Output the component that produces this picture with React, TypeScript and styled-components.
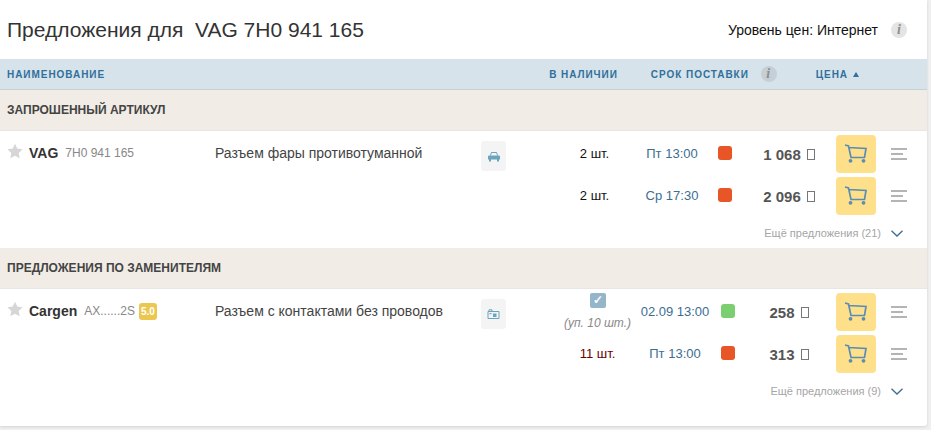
import React from "react";
import styled, { createGlobalStyle } from "styled-components";

const GlobalStyle = createGlobalStyle`
    html, body {
        margin: 0;
        padding: 0;
        width: 931px;
        height: 430px;
        overflow: hidden;
        background: #f0f0f0;
        font-family: "Liberation Sans", Arial, sans-serif;
    }
`;

const Panel = styled.div`
    width: 927px;
    height: 426px;
    background: #fff;
    border-radius: 0 0 3px 0;
    box-shadow: 0 1px 3px rgba(0, 0, 0, 0.12);
`;

const TopBar = styled.header`
    height: 59px;
    display: flex;
    align-items: center;
    justify-content: space-between;
    padding: 0 20px 0 7px;
`;

const Title = styled.h1`
    margin: 0;
    font-size: 21px;
    font-weight: 400;
    color: #333;
    white-space: pre;
`;

const PriceLevel = styled.div`
    display: flex;
    align-items: center;
    gap: 13px;
    font-size: 14px;
    color: #111;
`;

const InfoBadge = styled.span<{ $dark?: boolean }>`
    width: 16px;
    height: 16px;
    border-radius: 50%;
    background: ${(p) => (p.$dark ? "#c4cfd6" : "#e4e4e4")};
    color: #8e8e8e;
    font-family: "Liberation Serif", serif;
    font-style: italic;
    font-weight: 700;
    font-size: 14px;
    line-height: 16px;
    text-align: center;
`;

const TableHead = styled.div`
    height: 30px;
    display: flex;
    align-items: center;
    padding-left: 7px;
    background: #d7e3ea;
    border-bottom: 1px solid #c9d0d2;
    font-size: 10px;
    font-weight: 700;
    letter-spacing: 0.95px;
    color: #30709c;
`;

const HeadName = styled.span`
    flex: 1;
`;

const HeadStock = styled.span`
    margin-right: 33px;
`;

const HeadTerm = styled.span`
    margin-right: 12px;
`;

const HeadPrice = styled.span`
    margin-left: 39px;
    margin-right: 68px;
`;

const SortArrow = styled.span`
    display: inline-block;
    margin-left: 5px;
    border-left: 3px solid transparent;
    border-right: 3px solid transparent;
    border-bottom: 5px solid #30709c;
    vertical-align: 1px;
`;

const SectionTitle = styled.div`
    height: 41px;
    display: flex;
    align-items: center;
    padding-left: 7px;
    background: #f1ede6;
    border-bottom: 1px solid #e6e6e6;
    box-sizing: border-box;
    font-size: 12px;
    font-weight: 700;
    color: #444;
`;

const Group = styled.section`
    padding-top: 4px;
    display: flex;
    flex-direction: column;
    gap: 4px;

    &:last-child {
        padding-bottom: 20px;
    }
`;

const Row = styled.div<{ $shift: number }>`
    display: grid;
    grid-template-columns: 208px 266px ${(p) => 75 + p.$shift}px 77px 78px ${(p) => 31 - p.$shift}px 94px 40px 51px;
    height: 38px;
    padding-left: 7px;
    align-items: center;
`;

const PartCell = styled.div`
    display: flex;
    align-items: center;
    margin-top: -2px;
`;

const StarIcon = styled.svg`
    width: 16px;
    height: 16px;
    margin: -4px 6px 0 0;
    fill: #d6d6d6;
`;

const Brand = styled.span`
    font-size: 14px;
    font-weight: 700;
    color: #333;
    margin-right: 7px;
`;

const Article = styled.span`
    font-size: 12px;
    color: #888;
`;

const Rating = styled.span`
    width: 18px;
    height: 17px;
    margin-left: 4px;
    border-radius: 3px;
    background: #ecc750;
    color: #fff;
    font-size: 10px;
    font-weight: 700;
    line-height: 17px;
    text-align: center;
`;

const Description = styled.div`
    font-size: 14px;
    color: #444;
    margin-top: -2px;
`;

const IconBox = styled.div`
    width: 25px;
    height: 30px;
    margin-top: 6px;
    align-self: start;
    display: flex;
    align-items: center;
    justify-content: center;
    border-radius: 3px;
    background: #f4f4f4;
`;

const StockCell = styled.div<{ $low?: boolean }>`
    font-size: 13px;
    color: ${(p) => (p.$low ? "#6b0000" : "#111")};
    text-align: center;
    white-space: nowrap;
    margin-top: -1px;
`;

const Check = styled.div`
    width: 16px;
    height: 15px;
    margin: 0 auto 8px;
    border-radius: 2px;
    background: #93b6cb;
    color: #fff;
    font-size: 12px;
    font-weight: 700;
    line-height: 15px;
`;

const PackNote = styled.div`
    font-size: 12px;
    font-style: italic;
    color: #888;
`;

const Term = styled.div`
    font-size: 13px;
    color: #3c6e92;
    text-align: center;
    white-space: nowrap;
    margin-top: -1px;
`;

const Light = styled.span<{ $ok?: boolean }>`
    display: block;
    width: 14px;
    height: 14px;
    margin: -2px 0 0 7px;
    border-radius: 3px;
    background: ${(p) => (p.$ok ? "#7ccf70" : "#e85527")};
`;

const Price = styled.div`
    display: flex;
    align-items: center;
    justify-content: center;
    gap: 6px;
    font-size: 15px;
    font-weight: 700;
    color: #555;
`;

const MissingGlyph = styled.span`
    width: 6px;
    height: 9px;
    border: 1px solid #777;
`;

const CartButton = styled.button`
    width: 40px;
    height: 38px;
    padding: 0;
    border: none;
    border-radius: 4px;
    background: #ffe08a;
    display: flex;
    align-items: center;
    justify-content: center;
`;

const MenuIcon = styled.svg`
    width: 16px;
    height: 12px;
    margin-left: 15px;
    fill: #b4b4b4;
`;

const MoreRow = styled.div`
    height: 33px;
    margin-top: -4px;
    padding: 3px 24px 0 0;
    box-sizing: border-box;
    display: flex;
    align-items: center;
    justify-content: flex-end;
    gap: 10px;
    font-size: 11px;
    color: #a5a5a5;
`;

const Star = () => (
    <StarIcon viewBox="0 0 24 24">
        <path d="M12 1l3.4 7.4 8 1-5.9 5.5 1.6 8L12 19l-7.100 3.900 1.600-8L.6 9.400l8-1z" />
    </StarIcon>
);

const Car = () => (
    <svg width="12" height="11" viewBox="0 0 12 11">
        <path d="M2.500 4.500L3.400 1.500H8.600L9.500 4.500" fill="none" stroke="#6aa5bd" strokeWidth="1" />
        <path d="M0 5.500Q0 4.500 1 4.500H11Q12 4.500 12 5.500V8.500H0zM1 8.500H3V10.500H1zM9 8.500H11V10.500H9z" fill="#6aa5bd" />
    </svg>
);

const Connector = () => (
    <svg width="13" height="10" viewBox="0 0 13 10">
        <path d="M1 2.500H12V9.500H1zM2 2.500V.8H5V2.500" fill="none" stroke="#6aa5bd" strokeWidth="1" />
        <rect x="6" y="4.500" width="3.500" height="3.500" fill="#6aa5bd" />
        <rect x="2.500" y="4" width="2" height="1.200" fill="#6aa5bd" />
    </svg>
);

const Cart = () => (
    <svg width="24" height="20" viewBox="0 0 24 20">
        <path d="M1 1L4.500 2L7 13.500H20.500L22 4.500L5 3.500" fill="none" stroke="#5a8db5" strokeWidth="1.700" />
        <circle cx="6.500" cy="16.800" r="1.900" fill="#5a8db5" />
        <circle cx="19.500" cy="16.800" r="1.900" fill="#5a8db5" />
    </svg>
);

const Menu = () => (
    <MenuIcon viewBox="0 0 16 12">
        <rect y="0" width="16" height="2" />
        <rect y="5" width="12" height="2" />
        <rect y="10" width="16" height="2" />
    </MenuIcon>
);

const Chevron = () => (
    <svg width="12" height="7" viewBox="0 0 12 7">
        <path d="M.5 .8L6 6L11.500 .8" fill="none" stroke="#3f6a96" strokeWidth="1.300" />
    </svg>
);

type Offer = {
    stock?: string;
    low?: boolean;
    pack?: string;
    term: string;
    ok?: boolean;
    price: string;
};

type OfferGroup = {
    section: string;
    brand: string;
    article: string;
    rating?: string;
    name: string;
    icon: React.ReactNode;
    shift: number;
    more: string;
    offers: Offer[];
};

const groups: OfferGroup[] = [
    {
        section: "ЗАПРОШЕННЫЙ АРТИКУЛ",
        brand: "VAG",
        article: "7H0 941 165",
        name: "Разъем фары противотуманной",
        icon: <Car />,
        shift: 0,
        more: "Ещё предложения (21)",
        offers: [
            { stock: "2 шт.", term: "Пт 13:00", price: "1 068" },
            { stock: "2 шт.", term: "Ср 17:30", price: "2 096" },
        ],
    },
    {
        section: "ПРЕДЛОЖЕНИЯ ПО ЗАМЕНИТЕЛЯМ",
        brand: "Cargen",
        article: "AX......2S",
        rating: "5.0",
        name: "Разъем с контактами без проводов",
        icon: <Connector />,
        shift: 3,
        more: "Ещё предложения (9)",
        offers: [
            { pack: "(уп. 10 шт.)", term: "02.09 13:00", ok: true, price: "258" },
            { stock: "11 шт.", low: true, term: "Пт 13:00", price: "313" },
        ],
    },
];

const App = () => {
    return (
        <Panel>
            <GlobalStyle />
            <TopBar>
                <Title>Предложения для  VAG 7H0 941 165</Title>
                <PriceLevel>
                    Уровень цен: Интернет
                    <InfoBadge>i</InfoBadge>
                </PriceLevel>
            </TopBar>
            <TableHead>
                <HeadName>НАИМЕНОВАНИЕ</HeadName>
                <HeadStock>В НАЛИЧИИ</HeadStock>
                <HeadTerm>СРОК ПОСТАВКИ</HeadTerm>
                <InfoBadge $dark>i</InfoBadge>
                <HeadPrice>
                    ЦЕНА
                    <SortArrow />
                </HeadPrice>
            </TableHead>
            {groups.map((group) => (
                <React.Fragment key={group.brand}>
                    <SectionTitle>{group.section}</SectionTitle>
                    <Group>
                        {group.offers.map((offer, i) => (
                            <Row key={offer.term + offer.price} $shift={group.shift}>
                                {i === 0 ? (
                                    <>
                                        <PartCell>
                                            <Star />
                                            <Brand>{group.brand}</Brand>
                                            <Article>{group.article}</Article>
                                            {group.rating && <Rating>{group.rating}</Rating>}
                                        </PartCell>
                                        <Description>{group.name}</Description>
                                        <IconBox>{group.icon}</IconBox>
                                    </>
                                ) : (
                                    <>
                                        <span />
                                        <span />
                                        <span />
                                    </>
                                )}
                                {offer.pack ? (
                                    <StockCell>
                                        <Check>✓</Check>
                                        <PackNote>{offer.pack}</PackNote>
                                    </StockCell>
                                ) : (
                                    <StockCell $low={offer.low}>{offer.stock}</StockCell>
                                )}
                                <Term>{offer.term}</Term>
                                <Light $ok={offer.ok} />
                                <Price>
                                    {offer.price}
                                    <MissingGlyph />
                                </Price>
                                <CartButton>
                                    <Cart />
                                </CartButton>
                                <Menu />
                            </Row>
                        ))}
                        <MoreRow>
                            {group.more}
                            <Chevron />
                        </MoreRow>
                    </Group>
                </React.Fragment>
            ))}
        </Panel>
    );
};

export default App;
